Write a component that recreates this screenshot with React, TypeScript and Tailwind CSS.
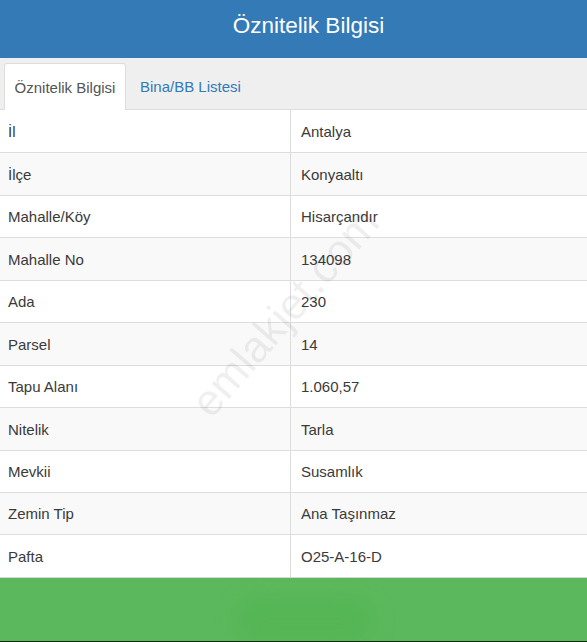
import React from "react";

const rows: [string, string][] = [
  ["İl", "Antalya"],
  ["İlçe", "Konyaaltı"],
  ["Mahalle/Köy", "Hisarçandır"],
  ["Mahalle No", "134098"],
  ["Ada", "230"],
  ["Parsel", "14"],
  ["Tapu Alanı", "1.060,57"],
  ["Nitelik", "Tarla"],
  ["Mevkii", "Susamlık"],
  ["Zemin Tip", "Ana Taşınmaz"],
  ["Pafta", "O25-A-16-D"],
];

export default function App() {
  return (
    <div
      className="w-[587px] h-[642px] overflow-hidden bg-white flex flex-col relative"
      style={{ fontFamily: '"Liberation Sans", Arial, sans-serif' }}
    >
      <div className="h-[58px] bg-[#337ab7] flex items-center justify-center pl-[30px] shrink-0">
        <span className="text-white text-[22.5px] leading-none -mt-[5px]">Öznitelik Bilgisi</span>
      </div>
      <div className="h-[52px] bg-[#efefef] border-b border-[#dddddd] flex items-end pl-[4px] shrink-0">
        <div className="h-[47px] w-[122px] bg-white border border-b-0 border-[#dddddd] rounded-t-[3px] flex items-center justify-center -mb-px text-[15px] text-[#555555] pt-[3px]">
          Öznitelik Bilgisi
        </div>
        <div className="h-[47px] flex items-center pl-[14px] text-[15px] text-[#337ab7] pt-[3px]">
          Bina/BB Listesi
        </div>
      </div>
      <div className="flex flex-col shrink-0">
        {rows.map(([k, v], i) => (
          <div
            key={k}
            className={`flex h-[42.45px] text-[15px] text-[#3a3a3a] ${i === 0 ? "" : "border-t border-[#dddddd]"} ${i % 2 === 1 ? "bg-[#f9f9f9]" : "bg-white"}`}
          >
            <div className="w-[291px] border-r border-[#dddddd] flex items-center pl-[8px] pt-[2px]">{k}</div>
            <div className="flex-1 flex items-center pl-[10px] pt-[2px]">{v}</div>
          </div>
        ))}
      </div>
      <div className="flex-1 bg-[#5cb85c] border-t border-[#d6d6d6] relative overflow-hidden">
        <div className="absolute left-[235px] top-[18px] w-[140px] h-[50px] rounded-full bg-[#52b552] blur-[10px] opacity-70" />
        <div className="absolute left-0 right-0 bottom-0 h-px bg-[#142514]" />
      </div>
      <div
        className="absolute left-[285px] top-[312px] text-[44px] text-[#000000] opacity-[0.06] whitespace-nowrap pointer-events-none"
        style={{ transform: "translate(-50%, -50%) rotate(-49deg)" }}
      >
        emlakjet.com
      </div>
    </div>
  );
}
